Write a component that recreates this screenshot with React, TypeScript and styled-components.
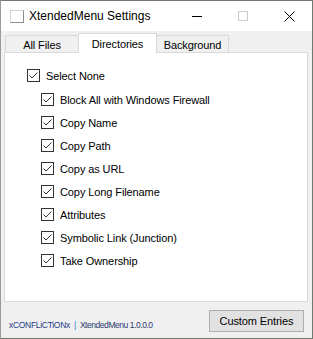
import * as React from 'react';
import styled, { createGlobalStyle } from 'styled-components';

const GlobalStyle = createGlobalStyle`
  html, body {
    margin: 0;
    padding: 0;
    background: #ffffff;
  }
  body {
    font-family: "Liberation Sans", Arial, sans-serif;
  }
`;

const Window = styled.div`
  box-sizing: border-box;
  width: 313px;
  height: 339px;
  display: flex;
  flex-direction: column;
  border: 1px solid #6f7a72;
  border-left-color: #9a9a9a;
  background: #f0f0f0;
  overflow: hidden;
`;

const TitleBar = styled.div`
  height: 30px;
  flex: none;
  display: flex;
  align-items: center;
  background: #ffffff;
`;

const AppIcon = styled.div`
  box-sizing: border-box;
  width: 14px;
  height: 13px;
  margin: 1px 5px 0 9px;
  border: 1px solid #d4d4d4;
  border-right-color: #8c8c8c;
  border-bottom-color: #8c8c8c;
`;

const Title = styled.span`
  flex: 1;
  font-size: 12px;
  color: #000;
`;

const CaptionButton = styled.div`
  width: 46px;
  height: 30px;
  display: flex;
  align-items: center;
  justify-content: center;
`;

const Client = styled.div`
  flex: 1;
  display: flex;
  flex-direction: column;
  padding: 2px 4px 0 3px;
`;

const TabRow = styled.div`
  display: flex;
  align-items: flex-end;
  height: 19px;
  padding-left: 1px;
  position: relative;
  z-index: 1;
`;

const Tab = styled.div<{ $active?: boolean; $w: number }>`
  box-sizing: border-box;
  width: ${(p) => p.$w}px;
  height: ${(p) => (p.$active ? 20 : 17)}px;
  margin-left: -1px;
  margin-bottom: ${(p) => (p.$active ? -1 : 0)}px;
  border: 1px solid #d9d9d9;
  border-bottom: none;
  background: ${(p) => (p.$active ? '#ffffff' : '#f0f0f0')};
  display: flex;
  align-items: center;
  justify-content: center;
  padding-top: ${(p) => (p.$active ? 0 : 2)}px;
  font-size: 11px;
  letter-spacing: -0.1px;
  color: #000;
  &:first-child {
    margin-left: 0;
  }
`;

const Panel = styled.div`
  box-sizing: border-box;
  height: 250px;
  flex: none;
  background: #ffffff;
  border: 1px solid #d9d9d9;
  padding: 11px 0 0 22px;
`;

const Row = styled.label<{ $indent?: boolean }>`
  display: flex;
  align-items: center;
  gap: 6px;
  height: 23px;
  padding-left: ${(p) => (p.$indent ? 14 : 0)}px;
  font-size: 11px;
  letter-spacing: -0.1px;
  color: #000;
`;

const Group = styled.div`
  margin-top: 1px;
`;

const Box = styled.span`
  box-sizing: border-box;
  width: 13px;
  height: 13px;
  flex: none;
  border: 1px solid #333333;
  background: #ffffff;
  display: flex;
  align-items: center;
  justify-content: center;
`;

const Footer = styled.div`
  flex: 1;
  display: flex;
  align-items: center;
  justify-content: space-between;
  padding: 0 4px 0 5px;
`;

const Credits = styled.span`
  font-size: 8.5px;
  letter-spacing: -0.3px;
  padding-top: 10px;
  color: #243a86;
`;

const Version = styled.span`
  letter-spacing: -0.45px;
  color: #2a3a70;
`;

const Sep = styled.span`
  color: #2d7bd6;
  margin: 0 4px;
`;

const Button = styled.button`
  box-sizing: border-box;
  width: 95px;
  height: 22px;
  margin-top: 1px;
  border: 1px solid #adadad;
  background: #e1e1e1;
  font-family: "Liberation Sans", Arial, sans-serif;
  font-size: 11px;
  letter-spacing: -0.1px;
  color: #000;
  padding: 0;
`;

const Check = () => (
  <Box>
    <svg width="11" height="11" viewBox="0 0 11 11">
      <polyline points="1.5,5.5 4,8 9.5,2.5" fill="none" stroke="#333" strokeWidth="1" />
    </svg>
  </Box>
);

const items = [
  'Block All with Windows Firewall',
  'Copy Name',
  'Copy Path',
  'Copy as URL',
  'Copy Long Filename',
  'Attributes',
  'Symbolic Link (Junction)',
  'Take Ownership',
];

export default function App() {
  return (
    <>
      <GlobalStyle />
      <Window>
        <TitleBar>
          <AppIcon />
          <Title>XtendedMenu Settings</Title>
          <CaptionButton>
            <svg width="10" height="10" viewBox="0 0 10 10">
              <line x1="0" y1="5.5" x2="10" y2="5.5" stroke="#000" strokeWidth="1" />
            </svg>
          </CaptionButton>
          <CaptionButton>
            <svg width="10" height="10" viewBox="0 0 10 10">
              <rect x="0.5" y="0.5" width="9" height="9" fill="none" stroke="#cccccc" strokeWidth="1" />
            </svg>
          </CaptionButton>
          <CaptionButton>
            <svg width="11" height="11" viewBox="0 0 11 11">
              <path d="M0.5 0.5 L10.5 10.5 M10.5 0.5 L0.5 10.5" stroke="#000" strokeWidth="1" />
            </svg>
          </CaptionButton>
        </TitleBar>
        <Client>
          <TabRow>
            <Tab $w={74}>All Files</Tab>
            <Tab $w={79} $active>
              Directories
            </Tab>
            <Tab $w={73}>Background</Tab>
          </TabRow>
          <Panel>
            <Row>
              <Check />
              Select None
            </Row>
            <Group>
              {items.map((t) => (
                <Row key={t} $indent>
                  <Check />
                  {t}
                </Row>
              ))}
            </Group>
          </Panel>
          <Footer>
            <Credits>
              xCONFLiCTiONx<Sep>|</Sep>
              <Version>XtendedMenu 1.0.0.0</Version>
            </Credits>
            <Button>Custom Entries</Button>
          </Footer>
        </Client>
      </Window>
    </>
  );
}
